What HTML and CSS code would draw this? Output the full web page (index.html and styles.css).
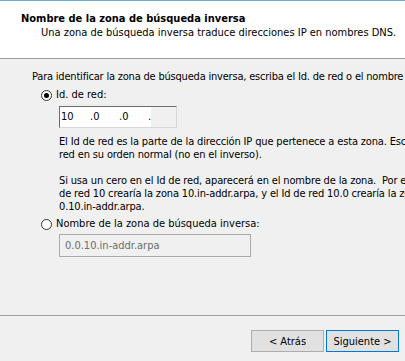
FILE: index.html
```html
<!DOCTYPE html>
<html lang="es">
<head>
    <meta charset="UTF-8">
    <title>Nombre de la zona de búsqueda inversa</title>
    <link rel="stylesheet" href="styles.css">
</head>
<body>
    <div class="wizard">
        <div class="header">
            <div class="titulo">Nombre de la zona de búsqueda inversa</div>
            <div class="subtitulo">Una zona de búsqueda inversa traduce direcciones IP en nombres DNS.</div>
        </div>

        <div class="cuerpo">
            <p class="intro">Para identificar la zona de búsqueda inversa, escriba el Id. de red o el nombre de la zona.</p>

            <label class="opcion">
                <span class="radio checked"></span>
                <span>Id. de red:</span>
            </label>
            <div class="ip">
                <span class="seg">10</span>
                <span class="seg">.0</span>
                <span class="seg">.0</span>
                <span class="seg vacio">.</span>
            </div>

            <div class="ayuda">
                <p>El Id de red es la parte de la dirección IP que pertenece a esta zona. Escriba el Id de<br>red en su orden normal (no en el inverso).</p>
                <p>Si usa un cero en el Id de red, aparecerá en el nombre de la zona.&nbsp; Por ejemplo, el Id<br>de red 10 crearía la zona 10.in-addr.arpa, y el Id de red 10.0 crearía la zona<br>0.10.in-addr.arpa.</p>
            </div>

            <label class="opcion">
                <span class="radio"></span>
                <span>Nombre de la zona de búsqueda inversa:</span>
            </label>
            <div class="nombre-zona">0.0.10.in-addr.arpa</div>
        </div>

        <div class="pie">
            <button class="boton">&lt; Atrás</button>
            <button class="boton principal">Siguiente &gt;</button>
        </div>
    </div>
</body>
</html>
```

FILE: styles.css
```css
body {
    margin: 0;
    padding: 0;
    font-family: "DejaVu Sans Condensed", "DejaVu Sans", sans-serif;
    font-size: 11px;
    color: #000;
    background-color: #f0f0f0;
    overflow: hidden;
}
.wizard {
    width: 405px;
    height: 361px;
    display: flex;
    flex-direction: column;
    overflow: hidden;
}
.header {
    height: 59px;
    box-sizing: border-box;
    background-color: #fff;
    border-top: 1px solid #6fa9d1;
    border-bottom: 1px solid #a0a0a0;
    padding: 11px 0 0 21px;
    flex-shrink: 0;
}
.titulo {
    font-weight: bold;
    line-height: 14px;
}
.subtitulo {
    padding-left: 20px;
    line-height: 14px;
}
.cuerpo {
    flex: 1;
    padding: 11px 0 0 32px;
    white-space: nowrap;
}
.intro {
    margin: 0 0 4px 0;
    line-height: 14px;
    letter-spacing: -0.2px;
}
.opcion {
    display: flex;
    align-items: center;
    gap: 4px;
    margin-left: 9px;
    line-height: 14px;
}
.radio {
    width: 11px;
    height: 11px;
    border: 1px solid #333;
    border-radius: 50%;
    background-color: #fff;
    box-sizing: border-box;
    position: relative;
}
.radio.checked::after {
    content: "";
    position: absolute;
    left: 2px;
    top: 2px;
    width: 5px;
    height: 5px;
    border-radius: 50%;
    background-color: #000;
}
.ip {
    display: flex;
    width: 118px;
    height: 22px;
    box-sizing: border-box;
    margin: 4px 0 0 27px;
    border-top: 1px solid #6d6d6d;
    border-left: 1px solid #6d6d6d;
    border-right: 1px solid #d8d8d8;
    border-bottom: 1px solid #d8d8d8;
    background: linear-gradient(to right, #fff 91px, #f0f0f0 91px);
    line-height: 20px;
}
.seg {
    width: 29px;
    padding-left: 1px;
}
.ayuda {
    margin: 7px 0 0 27px;
    letter-spacing: -0.15px;
}
.ayuda p {
    margin: 0 0 13px 0;
    line-height: 13px;
}
.ayuda p:last-child {
    margin-bottom: 4px;
}
.nombre-zona {
    width: 192px;
    height: 23px;
    box-sizing: border-box;
    margin: 3px 0 0 27px;
    border: 1px solid #aaa;
    color: #6d6d6d;
    padding-left: 5px;
    line-height: 21px;
}
.pie {
    height: 46px;
    flex-shrink: 0;
    border-top: 1px solid #a0a0a0;
    display: flex;
    justify-content: flex-end;
    align-items: flex-start;
    gap: 2px;
    padding: 14px 6px 0 0;
    box-sizing: border-box;
}
.boton {
    width: 73px;
    height: 22px;
    font-family: inherit;
    font-size: 11px;
    background-color: #e1e1e1;
    border: 1px solid #adadad;
    color: #000;
    padding: 0;
}
.boton.principal {
    border-color: #0078d7;
}
```
